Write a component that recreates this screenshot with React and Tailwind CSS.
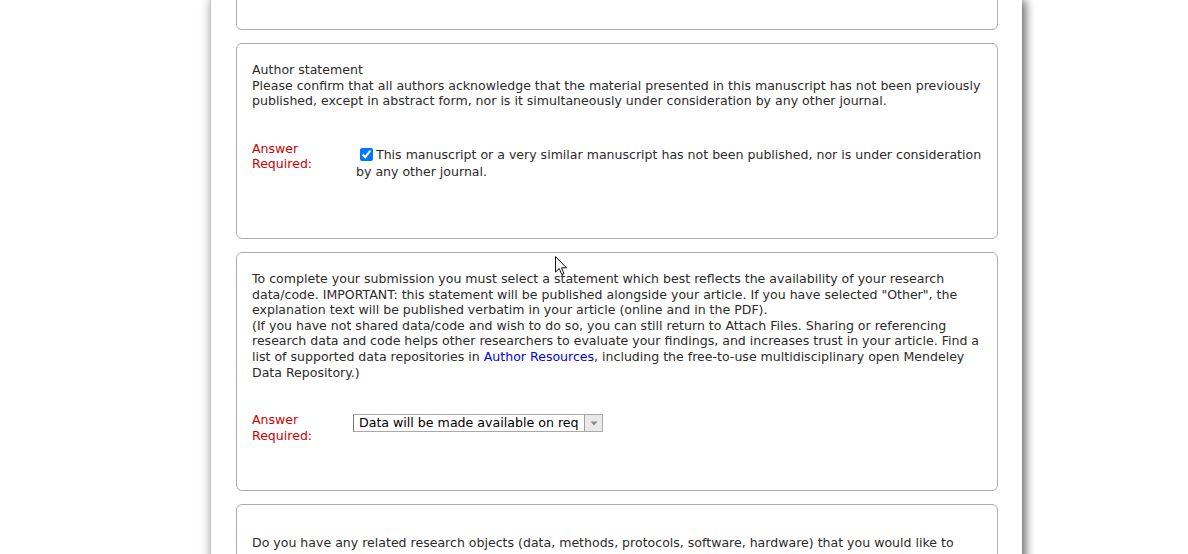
import React from "react";

const font = { fontFamily: '"DejaVu Sans", Verdana, sans-serif' };

function Lines({ lines }) {
  return (
    <div className="leading-[15.6px] whitespace-nowrap">
      {lines.map((l, i) => (
        <div key={i}>{l}</div>
      ))}
    </div>
  );
}

function Label() {
  return (
    <div className="w-[104px] shrink-0 text-[#cc0000] leading-[15.6px]">
      <div>Answer</div>
      <div>Required:</div>
    </div>
  );
}

export default function App() {
  return (
    <div className="w-[1188px] h-[554px] overflow-hidden bg-white relative" style={font}>
      <div className="ml-[210px] w-[812px] h-[600px] bg-white border-l border-[#c8c8c8] shadow-[4px_0_9px_rgba(0,0,0,0.55),-3px_0_9px_rgba(0,0,0,0.12)] pl-[25px] pr-[24px] flex flex-col gap-[13px] text-[12.55px] text-[#2b2b2b]">
        {/* card 1 (cut off) */}
        <div className="-mt-[31px] h-[61px] shrink-0 border border-[#adadad] rounded-[6px]" />

        {/* card 2 */}
        <div className="h-[196px] shrink-0 border border-[#adadad] rounded-[6px] pt-[18px] px-[15px]">
          <Lines
            lines={[
              "Author statement",
              "Please confirm that all authors acknowledge that the material presented in this manuscript has not been previously",
              "published, except in abstract form, nor is it simultaneously under consideration by any other journal.",
            ]}
          />
          <div className="mt-[32px] flex">
            <Label />
            <div className="pt-[5px] leading-[17px] whitespace-nowrap">
              <div>
                <input
                  type="checkbox"
                  checked
                  readOnly
                  className="m-0 ml-[4px] mr-[3px] w-[13px] h-[13px] align-[-2px] accent-[#0075ff]"
                />
                This manuscript or a very similar manuscript has not been published, nor is under consideration
              </div>
              <div>by any other journal.</div>
            </div>
          </div>
        </div>

        {/* card 3 */}
        <div className="h-[239px] shrink-0 border border-[#adadad] rounded-[6px] pt-[18px] px-[15px]">
          <div className="leading-[15.6px] whitespace-nowrap">
            <div>To complete your submission you must select a statement which best reflects the availability of your research</div>
            <div>data/code. IMPORTANT: this statement will be published alongside your article. If you have selected "Other", the</div>
            <div>explanation text will be published verbatim in your article (online and in the PDF).</div>
            <div>(If you have not shared data/code and wish to do so, you can still return to Attach Files. Sharing or referencing</div>
            <div>research data and code helps other researchers to evaluate your findings, and increases trust in your article. Find a</div>
            <div>
              list of supported data repositories in <span className="text-[#0000ee]">Author Resources</span>, including the free-to-use multidisciplinary open Mendeley
            </div>
            <div>Data Repository.)</div>
          </div>
          <div className="mt-[32px] flex">
            <Label />
            <div className="pt-[2px] -ml-[3px]">
              <div className="flex w-[250px] h-[18px] border border-[#a9a9a9] border-l-[#767676] bg-white">
                <div className="w-[230px] shrink-0 overflow-hidden whitespace-nowrap pl-[5px] leading-[16px] text-[12.6px] text-black">
                  Data will be made available on req
                </div>
                <div className="flex-1 border-l border-[#a0a0a0] bg-[#e9e9e9] flex items-center justify-center">
                  <svg width="8" height="5" viewBox="0 0 8 5">
                    <path d="M0.5 0.5 L7.5 0.5 L4 4.5 Z" fill="#8a8a8a" />
                  </svg>
                </div>
              </div>
            </div>
          </div>
        </div>

        {/* card 4 */}
        <div className="h-[200px] shrink-0 border border-[#adadad] rounded-[6px] pt-[30px] px-[15px]">
          <div className="leading-[15.6px] whitespace-nowrap">
            <div>Do you have any related research objects (data, methods, protocols, software, hardware) that you would like to</div>
            <div>
              publish alongside your original manuscript as additional papers in <span className="text-[#0000ee]">Research Elements</span> ?
            </div>
          </div>
        </div>
      </div>

      {/* mouse cursor */}
      <svg className="absolute left-[555px] top-[256px]" width="13" height="20" viewBox="0 0 13 20">
        <path
          d="M0.5 0.5 L0.5 16 L4.2 12.5 L6.8 18.5 L9 17.6 L6.5 11.8 L11.5 11.8 Z"
          fill="white"
          stroke="#111"
          strokeWidth="1"
          strokeLinejoin="round"
        />
      </svg>
    </div>
  );
}
